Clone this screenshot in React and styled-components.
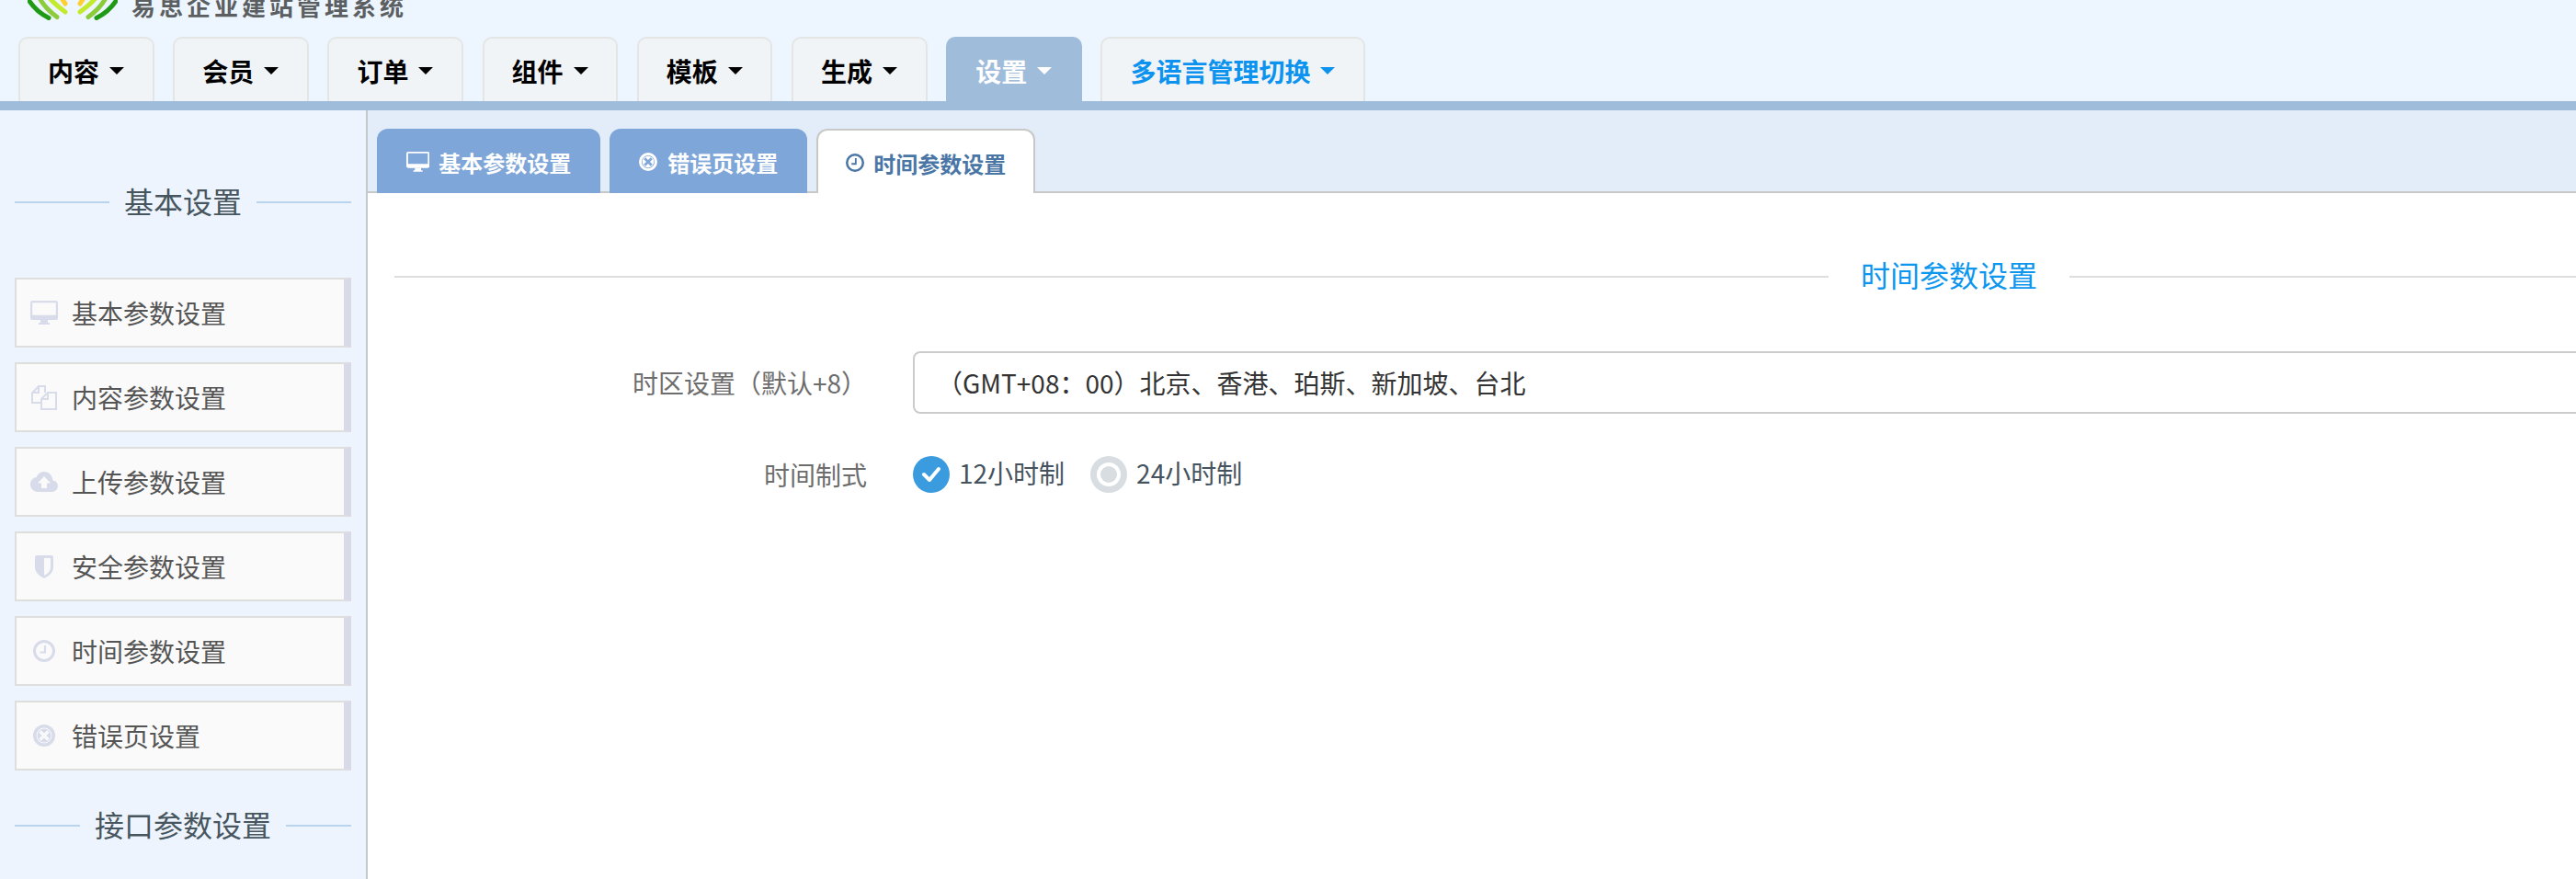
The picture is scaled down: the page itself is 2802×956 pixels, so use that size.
import React from "react";
import styled, { createGlobalStyle } from "styled-components";

const Global = createGlobalStyle`
  html, body { margin: 0; padding: 0; width: 2802px; height: 956px; overflow: hidden; background: #fff; }
  body { font-family: "Noto Sans CJK SC", "Noto Sans", sans-serif; }
  * { box-sizing: border-box; }
`;

const Page = styled.div`
  width: 2802px;
  height: 956px;
  display: flex;
  flex-direction: column;
  overflow: hidden;
`;

const Header = styled.header`
  flex: 0 0 120px;
  display: flex;
  flex-direction: column;
  background: #edf6ff;
  border-bottom: 10px solid #a0bcdb;
`;

const Brand = styled.div`
  flex: 0 0 40px;
  display: flex;
  align-items: flex-end;
  gap: 15px;
  padding: 0 0 18px 30px;
  overflow: hidden;
`;

const BrandName = styled.span`
  font-size: 26px;
  line-height: 24px;
  font-weight: 700;
  letter-spacing: 4px;
  margin-bottom: 4px;
  color: #5c5f62;
  white-space: nowrap;
`;

const Nav = styled.nav`
  flex: 0 0 70px;
  display: flex;
  gap: 20.7px;
  padding-left: 20px;
`;

const NavTab = styled.div`
  display: flex;
  align-items: center;
  gap: 11px;
  padding: 1px 30.5px 0 30px;
  font-size: 28px;
  font-weight: 700;
  color: ${(p) => (p.$active ? "#fff" : p.$accent ? "#0b93ef" : "#000")};
  background: ${(p) => (p.$active ? "#a0bcdb" : "#f0f4f6")};
  border: 2px solid ${(p) => (p.$active ? "#a0bcdb" : "#e4e6e6")};
  border-bottom: 0;
  border-radius: 10px 10px 0 0;
  white-space: nowrap;
`;

const Caret = styled.i`
  width: 0;
  height: 0;
  border-left: 8px solid transparent;
  border-right: 8px solid transparent;
  border-top: 8px solid currentColor;
`;

const Main = styled.div`
  flex: 1;
  display: flex;
  min-height: 0;
`;

const Sidebar = styled.aside`
  flex: 0 0 400px;
  display: flex;
  flex-direction: column;
  padding: 70px 16px 0;
  background: #edf4fd;
  border-right: 2px solid #c4c9cd;
`;

const SideTitle = styled.div`
  flex: 0 0 56px;
  display: flex;
  align-items: center;
  gap: 16px;
  margin: ${(p) => (p.$later ? "30px 0 0" : "0 0 56px")};
  font-size: 32px;
  line-height: 56px;
  color: #46555e;
  white-space: nowrap;
  &::before, &::after {
    content: "";
    flex: 1;
    height: 2px;
    margin-top: 4px;
    background: #b9d4ef;
  }
`;

const SideList = styled.ul`
  list-style: none;
  margin: 0;
  padding: 0;
  display: flex;
  flex-direction: column;
  gap: 16px;
`;

const SideItem = styled.li`
  height: 76px;
  display: flex;
  align-items: center;
  background: #fafafa;
  border: 2px solid #dedede;
  border-right: 8px solid #d8dae8;
  font-size: 28px;
  color: #555;
`;

const SideIcon = styled.span`
  flex: 0 0 60px;
  display: flex;
  justify-content: center;
  color: #d8dbe9;
`;

const Content = styled.main`
  flex: 1;
  min-width: 0;
  display: flex;
  flex-direction: column;
`;

const TabBar = styled.div`
  flex: 0 0 90px;
  display: flex;
  align-items: flex-end;
  gap: 10px;
  padding-left: 10px;
  background: #e2edf9;
  border-bottom: 2px solid #c8c8c8;
`;

const TabItem = styled.div`
  height: 70px;
  margin-bottom: -2px;
  display: flex;
  align-items: center;
  gap: ${(p) => p.$gap || 10}px;
  padding: 2px ${(p) => (p.$active ? 30 : 32)}px 0;
  font-size: 24px;
  font-weight: 700;
  white-space: nowrap;
  color: ${(p) => (p.$active ? "#4a76a6" : "#fff")};
  background: ${(p) => (p.$active ? "#fff" : "#7fa6d8")};
  border: ${(p) => (p.$active ? "2px solid #c8c8c8" : "0")};
  border-bottom: 0;
  border-radius: 12px 12px 0 0;
`;

const Panel = styled.section`
  width: 3382px;
  margin-left: 29px;
  display: flex;
  flex-direction: column;
`;

const Legend = styled.div`
  flex: 0 0 60px;
  margin-top: 58px;
  display: flex;
  align-items: center;
  gap: 35px;
  font-size: 32px;
  line-height: 56px;
  color: #0d96ee;
  white-space: nowrap;
  &::before, &::after {
    content: "";
    flex: 1;
    height: 2px;
    margin-top: 6px;
    background: #dedede;
  }
`;

const Row = styled.div`
  display: grid;
  grid-template-columns: 514px 1fr;
  column-gap: 50px;
  align-items: center;
  margin-top: ${(p) => p.$top}px;
`;

const Label = styled.label`
  text-align: right;
  font-size: 28px;
  color: #6d6d6d;
  white-space: nowrap;
`;

const Field = styled.div`
  height: 68px;
  display: flex;
  align-items: center;
  padding-left: 24px;
  border: 2px solid #ccc;
  border-radius: 8px;
  background: #fff;
  font-size: 28px;
  color: #333;
  white-space: nowrap;
`;

const Choices = styled.div`
  display: flex;
  align-items: center;
  gap: 28px;
`;

const Choice = styled.div`
  display: flex;
  align-items: center;
  gap: 10px;
  font-size: 28px;
  line-height: 40px;
  color: #45535e;
`;

const ChoiceText = styled.span`
  position: relative;
  top: -2px;
`;

const Radio = styled.span`
  width: 40px;
  height: 40px;
  flex: none;
  display: flex;
  align-items: center;
  justify-content: center;
  border-radius: 50%;
  background: ${(p) => (p.$on ? "#3a9bdf" : "#d7dde0")};
`;

const RadioDot = styled.span`
  width: 18px;
  height: 18px;
  border-radius: 50%;
  background: #d7dde0;
  box-shadow: 0 0 0 4px #fff;
`;

const Desktop = ({ s = 1 }) => (
  <svg width={30 * s} height={26 * s} viewBox="0 0 30 26" fill="currentColor">
    <path fillRule="evenodd" d="M2.5 0h25A2.5 2.5 0 0 1 30 2.5v16a2.5 2.5 0 0 1-2.5 2.5h-25A2.5 2.5 0 0 1 0 18.5v-16A2.5 2.5 0 0 1 2.5 0zM2.2 2.2v13.6h25.6V2.2z" />
    <path d="M11 21h8v3h2v2H9v-2h2z" />
  </svg>
);
const Files = () => (
  <svg width="28" height="27" viewBox="0 0 28 27" fill="none" stroke="currentColor" strokeWidth="2">
    <path d="M10 19H1V8.5L8 1h7v7" />
    <path d="M8 1v7H1" />
    <path d="M11 26V15l7-7h9v18z" />
    <path d="M18 8v7h-7" />
  </svg>
);
const CloudUp = () => (
  <svg width="30" height="22" viewBox="0 0 30 22" fill="currentColor">
    <path d="M24.5 9.5C24 4 20 0 15 0c-4 0-7 2.5-8.2 6C3 6.5 0 9.8 0 13.8 0 18.3 3.5 22 8 22h15.5c3.5 0 6.5-3 6.5-6.5 0-3-2.3-5.5-5.500-6z" />
    <path fill="#fafafa" d="M15 5l7 7.5h-4V18h-6v-5.500H8z" />
  </svg>
);
const Shield = () => (
  <svg width="20" height="25" viewBox="0 0 20 25" fill="currentColor">
    <path d="M0 2q0-2 2-2h16q2 0 2 2v11c0 6-6 10-10 12C6 23 0 19 0 13z" />
    <path fill="#fafafa" d="M10 3h7v10c0 4.500-4 7.500-7 9z" />
  </svg>
);
const Clock = ({ d = 24 }) => (
  <svg width={d} height={d} viewBox="0 0 24 24" fill="none" stroke="currentColor">
    <circle cx="12" cy="12" r="10.500" strokeWidth="3" />
    <path d="M13 6v7.500H7.500" strokeWidth="2.200" />
  </svg>
);
const Cross = ({ d = 24, cut = "#fafafa" }) => (
  <svg width={d} height={d} viewBox="0 0 24 24" fill="none" stroke="currentColor">
    <circle cx="12" cy="12" r="10.200" strokeWidth="3.600" />
    <circle cx="12" cy="12" r="7.500" fill="currentColor" stroke="none" />
    <path d="M7.500 7.500l9 9m0-9l-9 9" stroke={cut} strokeWidth="3.200" />
  </svg>
);
const Logo = () => (
  <svg width="98" height="22" viewBox="0 0 98 22" fill="none" strokeWidth="5" strokeLinecap="round">
    <path d="M0-2Q8 12 23 19.500" stroke="#1f9a14" />
    <path d="M13-2Q19 9 32 18.500" stroke="#8ccc3a" />
    <path d="M24-2Q30 5 41 13" stroke="#c4ea2e" />
    <path d="M37-2L41 4" stroke="#ffcf30" strokeWidth="5" />
    <path d="M98-2Q90 12 75 19.500" stroke="#1f9a14" />
    <path d="M85-2Q79 9 66 18.500" stroke="#8ccc3a" />
    <path d="M74-2Q68 5 57 13" stroke="#c4ea2e" />
    <path d="M61-2L57 4" stroke="#ffcf30" strokeWidth="5" />
  </svg>
);
const Check = () => (
  <svg width="22" height="18" viewBox="0 0 22 18" fill="none" stroke="#fff" strokeWidth="4" strokeLinecap="round" strokeLinejoin="round">
    <path d="M3 9l6 6L19 3" />
  </svg>
);

const navs = ["内容", "会员", "订单", "组件", "模板", "生成"];
const sideItems = [
  [<Desktop key="a" />, "基本参数设置"],
  [<Files key="b" />, "内容参数设置"],
  [<CloudUp key="c" />, "上传参数设置"],
  [<Shield key="d" />, "安全参数设置"],
  [<Clock key="e" />, "时间参数设置"],
  [<Cross key="f" />, "错误页设置"],
];

export default function App() {
  return (
    <Page>
      <Global />
      <Header>
        <Brand>
          <Logo />
          <BrandName>易思企业建站管理系统</BrandName>
        </Brand>
        <Nav>
          {navs.map((n) => (
            <NavTab key={n}>
              {n}
              <Caret />
            </NavTab>
          ))}
          <NavTab $active>
            设置
            <Caret />
          </NavTab>
          <NavTab $accent>
            多语言管理切换
            <Caret />
          </NavTab>
        </Nav>
      </Header>
      <Main>
        <Sidebar>
          <SideTitle>基本设置</SideTitle>
          <SideList>
            {sideItems.map(([icon, text]) => (
              <SideItem key={text}>
                <SideIcon>{icon}</SideIcon>
                {text}
              </SideItem>
            ))}
          </SideList>
          <SideTitle $later>接口参数设置</SideTitle>
        </Sidebar>
        <Content>
          <TabBar>
            <TabItem>
              <Desktop s={0.84} />
              基本参数设置
            </TabItem>
            <TabItem $gap={11}>
              <Cross d={20} cut="#7fa6d8" />
              错误页设置
            </TabItem>
            <TabItem $active>
              <Clock d={20} />
              时间参数设置
            </TabItem>
          </TabBar>
          <Panel>
            <Legend>时间参数设置</Legend>
            <Row $top={54}>
              <Label>时区设置（默认+8）</Label>
              <Field>（GMT+08：00）北京、香港、珀斯、新加坡、台北</Field>
            </Row>
            <Row $top={46}>
              <Label>时间制式</Label>
              <Choices>
                <Choice>
                  <Radio $on>
                    <Check />
                  </Radio>
                  <ChoiceText>12小时制</ChoiceText>
                </Choice>
                <Choice>
                  <Radio>
                    <RadioDot />
                  </Radio>
                  <ChoiceText>24小时制</ChoiceText>
                </Choice>
              </Choices>
            </Row>
          </Panel>
        </Content>
      </Main>
    </Page>
  );
}
